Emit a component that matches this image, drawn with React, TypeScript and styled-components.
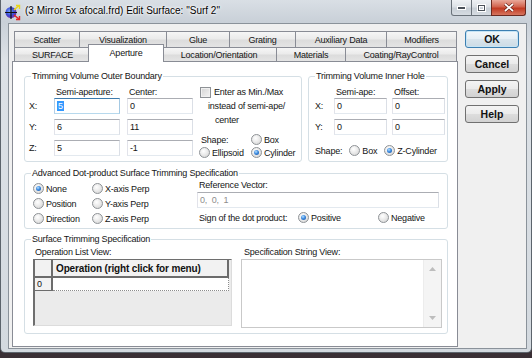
import React from "react";
import styled, { createGlobalStyle, css } from "styled-components";

const GlobalStyle = createGlobalStyle`
  html, body {
    margin: 0;
    padding: 0;
    background: #22343d;
  }
`;

const Screen = styled.div`
  width: 532px;
  height: 358px;
  overflow: hidden;
  display: flex;
  flex-direction: column;
  background: linear-gradient(#5aa7b9 0, #5aa7b9 1px, #263840 1px, #3a2f35 100%);
  font-family: "Liberation Sans", Arial, sans-serif;
  font-size: 9px;
  letter-spacing: -0.2px;
  color: #151515;
`;

const Window = styled.div`
  height: 353px;
  flex: none;
  box-sizing: border-box;
  display: flex;
  flex-direction: column;
  border: 1px solid #5c646c;
  border-top: none;
  border-radius: 0 0 5px 5px;
  background: linear-gradient(to bottom, #d9dfe5 0, #c9d0d8 22px, #dde2e7 60px, #d3d9df 100%);
`;

const TitleBar = styled.div`
  height: 23px;
  flex: none;
  display: flex;
  align-items: flex-start;
  padding: 0 5px 0 3px;
`;

const Title = styled.div`
  margin: 4px 0 0 3px;
  font-size: 10px;
  letter-spacing: 0;
  line-height: 14px;
  color: #000;
  white-space: nowrap;
  text-shadow: 0 0 5px #fff, 0 0 3px #fff, 0 0 1px #fff;
`;

const WinButtons = styled.div`
  margin-left: auto;
  display: flex;
  height: 16px;
`;

const WinBtn = styled.div<{ $close?: boolean; $w: number }>`
  box-sizing: border-box;
  width: ${(p) => p.$w}px;
  height: 16px;
  display: flex;
  align-items: center;
  justify-content: center;
  border: 1px solid #6a727a;
  border-top: none;
  margin-left: -1px;
  background: linear-gradient(#eef1f4, #dce1e6 45%, #c8cfd6 55%, #d6dce2);
  &:first-child {
    margin-left: 0;
    border-bottom-left-radius: 3px;
  }
  ${(p) =>
    p.$close &&
    css`
      border-color: #6b2a20;
      border-bottom-right-radius: 3px;
      background: linear-gradient(#e9a99a, #d2634e 45%, #c13a22 55%, #d6755f);
    `}
`;

const Client = styled.div`
  flex: 1;
  min-height: 0;
  margin: 0 4px 3px 7px;
  border: 1px solid #8a929a;
  background: #f0f0f0;
  display: flex;
  align-items: stretch;
  padding: 6px 0 1px 3px;
`;

const TabControl = styled.div`
  width: 446px;
  margin-top: 1px;
  display: flex;
  flex-direction: column;
`;

const TabRow = styled.div<{ $h: number }>`
  display: flex;
  align-items: flex-end;
  height: ${(p) => p.$h}px;
  padding-left: 2px;
  flex: none;
`;

const Tab = styled.div<{ $w: number; $active?: boolean }>`
  box-sizing: border-box;
  width: ${(p) => p.$w}px;
  height: 100%;
  margin-left: -1px;
  display: flex;
  align-items: center;
  justify-content: center;
  white-space: nowrap;
  border: 1px solid #898c95;
  border-bottom: none;
  background: linear-gradient(#f6f6f6, #ebebeb 45%, #dcdcdc 55%, #e4e4e4);
  &:first-child {
    margin-left: 0;
  }
  ${(p) =>
    p.$active &&
    css`
      position: relative;
      z-index: 2;
      height: 18px;
      margin: 0 -2px -1px -3px;
      background: #fff;
      padding-bottom: 1px;
    `}
`;

const Pane = styled.div`
  flex: 1;
  background: #fff;
  border: 1px solid #898c95;
  padding: 14px 9px 0 11px;
  display: flex;
  flex-direction: column;
`;

const GroupRow = styled.div`
  display: flex;
  gap: 6px;
`;

const Group = styled.div<{ $w: number; $h: number; $mt?: number; $pad: string }>`
  position: relative;
  box-sizing: border-box;
  flex: none;
  width: ${(p) => p.$w}px;
  height: ${(p) => p.$h}px;
  margin-top: ${(p) => p.$mt ?? 0}px;
  padding: ${(p) => p.$pad};
  border: 1px solid #d5dfe5;
  border-radius: 3px;
  display: flex;
  align-items: flex-start;
`;

const Legend = styled.span`
  position: absolute;
  top: -6px;
  left: 6px;
  padding: 0 1px;
  line-height: 11px;
  background: #fff;
  white-space: nowrap;
`;

const CoordGrid = styled.div<{ $label: number; $field: number; $gap: number }>`
  display: grid;
  grid-template-columns: ${(p) => p.$label}px ${(p) => p.$field}px ${(p) => p.$field}px;
  grid-template-rows: 12px;
  grid-auto-rows: 21px;
  column-gap: ${(p) => p.$gap}px;
  align-items: start;
`;

const ColHead = styled.div`
  line-height: 12px;
  padding-left: 2px;
  white-space: nowrap;
`;

const RowLabel = styled.div`
  line-height: 16px;
`;

const Field = styled.div<{ $focus?: boolean; $disabled?: boolean }>`
  box-sizing: border-box;
  height: 16px;
  border: 1px solid;
  border-color: #abadb3 #dbdfe6 #e3e9ef #e2e3ea;
  background: #fff;
  padding-left: 2px;
  line-height: 14px;
  white-space: nowrap;
  color: ${(p) => (p.$disabled ? "#8d8d8d" : "#151515")};
  ${(p) =>
    p.$focus &&
    css`
      border-color: #3d7bad #a4c9e3 #b7d9ed #b5cfe7;
    `}
`;

const Selected = styled.span`
  background: #3399ff;
  color: #fff;
  padding: 0 1px;
`;

const SideColumn = styled.div<{ $ml: number }>`
  margin-left: ${(p) => p.$ml}px;
  display: flex;
  flex-direction: column;
`;

const CheckRow = styled.div`
  display: flex;
  align-items: flex-start;
`;

const CheckBox = styled.span`
  flex: none;
  box-sizing: border-box;
  width: 11px;
  height: 11px;
  margin: 1px 0 0 1px;
  border: 1px solid #8e9296;
  background: linear-gradient(135deg, #d4d4d4, #f4f4f4);
  box-shadow: inset 0 0 0 1px #f0f0f0;
`;

const CheckText = styled.div`
  margin: -1px 0 0 3px;
  line-height: 14px;
`;

const Line = styled.span<{ $indent?: number }>`
  display: block;
  white-space: nowrap;
  margin-left: ${(p) => p.$indent ?? 0}px;
`;

const ShapeGrid = styled.div`
  margin-top: 6px;
  display: grid;
  grid-template-columns: 52px auto;
  grid-auto-rows: 13px;
  align-items: center;
`;

const PadLabel = styled.span<{ $pl?: number }>`
  padding-left: ${(p) => p.$pl ?? 2}px;
  white-space: nowrap;
`;

const Option = styled.label`
  display: inline-flex;
  align-items: center;
  gap: 2px;
  white-space: nowrap;
`;

const RadioDot = styled.span<{ $on?: boolean }>`
  position: relative;
  flex: none;
  box-sizing: border-box;
  width: 11px;
  height: 11px;
  border-radius: 50%;
  border: 1px solid #8e9296;
  background: radial-gradient(circle at 40% 35%, #ffffff 0, #ebebeb 45%, #cfcfcf 100%);
  ${(p) =>
    p.$on &&
    css`
      &::after {
        content: "";
        position: absolute;
        inset: 2px;
        border-radius: 50%;
        background: radial-gradient(circle at 40% 35%, #b8e2ff 0, #3c8ae0 45%, #174f9c 100%);
      }
    `}
`;

const InnerShapeRow = styled.div`
  margin-top: 4px;
  height: 13px;
  display: flex;
  align-items: center;
  gap: 7px;
`;

const RadioGrid = styled.div`
  margin-top: 1px;
  display: grid;
  grid-template-columns: 59px 105px;
  grid-auto-rows: 15px;
  align-items: center;
`;

const RefColumn = styled.div`
  width: 242px;
  display: flex;
  flex-direction: column;
`;

const SmallLabel = styled.div<{ $pl: number }>`
  line-height: 11px;
  padding-left: ${(p) => p.$pl}px;
  white-space: nowrap;
`;

const SignRow = styled.div`
  margin-top: 3px;
  height: 13px;
  display: grid;
  grid-template-columns: 101px 80px auto;
  align-items: center;
`;

const ViewColumn = styled.div<{ $ml?: number }>`
  margin-left: ${(p) => p.$ml ?? 0}px;
  display: flex;
  flex-direction: column;
  gap: 1px;
`;

const OpGrid = styled.div`
  box-sizing: border-box;
  width: 199px;
  height: 67px;
  border-style: solid;
  border-width: 1px 1px 1px 2px;
  border-color: #6e6e6e #dcdcdc #dcdcdc #6e6e6e;
  background: #ebebeb;
  display: grid;
  grid-template-columns: 18px 176px;
  grid-template-rows: 18px 13px;
  align-content: start;
`;

const HeadCell = styled.div<{ $bold?: boolean }>`
  box-sizing: border-box;
  background: #f2f2f2;
  border-right: 2px solid #6c6c6c;
  border-bottom: 2px solid #6c6c6c;
  padding-left: 3px;
  display: flex;
  align-items: center;
  white-space: nowrap;
  ${(p) =>
    p.$bold &&
    css`
      font-weight: bold;
      font-size: 10px;
      letter-spacing: -0.15px;
      color: #111;
    `}
`;

const RowHead = styled.div`
  box-sizing: border-box;
  background: #f2f2f2;
  border-right: 2px solid #6c6c6c;
  border-bottom: 1px solid #6c6c6c;
  padding-left: 2px;
  line-height: 12px;
`;

const DataCell = styled.div`
  box-sizing: border-box;
  background: #fff;
  border-right: 1px dotted #8c8c8c;
  border-bottom: 1px dotted #8c8c8c;
`;

const SpecBox = styled.div`
  box-sizing: border-box;
  width: 201px;
  height: 69px;
  border: 1px solid #c9c9c9;
  background: #fff;
  display: flex;
  justify-content: flex-end;
`;

const ScrollTrack = styled.div`
  width: 17px;
  background: #f4f4f4;
  border-left: 1px solid #ececec;
  display: flex;
  flex-direction: column;
  justify-content: space-between;
  align-items: center;
  padding: 7px 0;
`;

const ButtonColumn = styled.div`
  margin-left: 7px;
  width: 54px;
  display: flex;
  flex-direction: column;
  gap: 7px;
`;

const DlgButton = styled.div<{ $default?: boolean }>`
  box-sizing: border-box;
  height: 18px;
  border: 1px solid #707070;
  border-radius: 3px;
  display: flex;
  align-items: center;
  justify-content: center;
  font-weight: bold;
  font-size: 10.5px;
  letter-spacing: 0;
  color: #111;
  background: linear-gradient(#f4f4f4, #ebebeb 48%, #dddddd 52%, #d2d2d2);
  ${(p) =>
    p.$default &&
    css`
      border-color: #3c7fb1;
      box-shadow: inset 0 0 0 1px #c6e4f5;
      background: linear-gradient(#f3f8fb, #e6eff5 48%, #d8e4ec 52%, #ccdbe5);
    `}
`;

const rowOneTabs = [
  { label: "Scatter", w: 66 },
  { label: "Visualization", w: 88 },
  { label: "Glue", w: 64 },
  { label: "Grating", w: 67 },
  { label: "Auxiliary Data", w: 92 },
  { label: "Modifiers", w: 71 },
];

const rowTwoTabs = [
  { label: "SURFACE", w: 77 },
  { label: "Aperture", w: 76, active: true },
  { label: "Location/Orientation", w: 116 },
  { label: "Materials", w: 70 },
  { label: "Coating/RayControl", w: 112 },
];

function Radio({ label, on }: { label: string; on?: boolean }) {
  return (
    <Option>
      <RadioDot $on={on} />
      {label}
    </Option>
  );
}

function AppIcon() {
  return (
    <svg width="18" height="18" viewBox="0 0 18 18" style={{ marginTop: 3, flex: "none" }}>
      <defs>
        <radialGradient id="ig" cx="40%" cy="40%" r="60%">
          <stop offset="0" stopColor="#7fb0ff" />
          <stop offset="0.6" stopColor="#3b4fd8" />
          <stop offset="1" stopColor="#6a2fb0" />
        </radialGradient>
      </defs>
      <circle cx="7" cy="9.5" r="5.5" fill="url(#ig)" />
      <path d="M7 3v13M1 9.5h12" stroke="#111" strokeWidth="1.2" />
      <path d="M10 7l5-4.5" stroke="#e8d51a" strokeWidth="1.6" />
      <path d="M12 2.5h3.5v3.5" fill="none" stroke="#e8d51a" strokeWidth="1.4" />
      <path d="M10 12l5 4" stroke="#e02626" strokeWidth="1.6" />
      <path d="M12 16.5h3.5V13" fill="none" stroke="#e02626" strokeWidth="1.4" />
    </svg>
  );
}

function ScrollArrow({ down }: { down?: boolean }) {
  return (
    <svg width="7" height="4" viewBox="0 0 7 4">
      <path d={down ? "M0 0h7L3.5 4z" : "M0 4h7L3.5 0z"} fill="#bdbdbd" />
    </svg>
  );
}

export default function App() {
  return (
    <Screen>
      <GlobalStyle />
      <Window>
        <TitleBar>
          <AppIcon />
          <Title>(3 Mirror 5x afocal.frd) Edit Surface: "Surf 2"</Title>
          <WinButtons>
            <WinBtn $w={21}>
              <svg width="9" height="4" viewBox="0 0 9 4">
                <rect x="0.5" y="0.5" width="8" height="3" fill="#4a5159" stroke="#fff" />
              </svg>
            </WinBtn>
            <WinBtn $w={21}>
              <svg width="9" height="8" viewBox="0 0 9 8">
                <rect x="0.5" y="0.5" width="8" height="7" fill="none" stroke="#fff" />
                <rect x="1.5" y="1.5" width="6" height="5" fill="none" stroke="#4a5159" />
                <rect x="2.5" y="2.5" width="4" height="3" fill="none" stroke="#fff" />
              </svg>
            </WinBtn>
            <WinBtn $w={35} $close>
              <svg width="10" height="9" viewBox="0 0 10 9">
                <path d="M1 1l8 7M9 1L1 8" stroke="#5a1a12" strokeWidth="3" />
                <path d="M1 1l8 7M9 1L1 8" stroke="#fff" strokeWidth="1.8" />
              </svg>
            </WinBtn>
          </WinButtons>
        </TitleBar>

        <Client>
          <TabControl>
            <TabRow $h={16}>
              {rowOneTabs.map((t) => (
                <Tab key={t.label} $w={t.w}>
                  {t.label}
                </Tab>
              ))}
            </TabRow>
            <TabRow $h={14}>
              {rowTwoTabs.map((t) => (
                <Tab key={t.label} $w={t.w} $active={t.active}>
                  {t.label}
                </Tab>
              ))}
            </TabRow>

            <Pane>
              <GroupRow>
                <Group $w={278} $h={86} $pad="9px 0 0 4px">
                  <Legend>Trimming Volume Outer Boundary</Legend>
                  <CoordGrid $label={18} $field={66} $gap={7}>
                    <span />
                    <ColHead>Semi-aperture:</ColHead>
                    <ColHead>Center:</ColHead>
                    <RowLabel>X:</RowLabel>
                    <Field $focus>
                      <Selected>5</Selected>
                    </Field>
                    <Field>0</Field>
                    <RowLabel>Y:</RowLabel>
                    <Field>6</Field>
                    <Field>11</Field>
                    <RowLabel>Z:</RowLabel>
                    <Field>5</Field>
                    <Field>-1</Field>
                  </CoordGrid>
                  <SideColumn $ml={6}>
                    <CheckRow>
                      <CheckBox />
                      <CheckText>
                        <Line>Enter as Min./Max</Line>
                        <Line $indent={-6}>instead of semi-ape/</Line>
                        <Line $indent={1}>center</Line>
                      </CheckText>
                    </CheckRow>
                    <ShapeGrid>
                      <PadLabel>Shape:</PadLabel>
                      <Radio label="Box" />
                      <Radio label="Ellipsoid" />
                      <Radio label="Cylinder" on />
                    </ShapeGrid>
                  </SideColumn>
                </Group>

                <Group $w={140} $h={86} $pad="9px 0 0 6px">
                  <Legend>Trimming Volume Inner Hole</Legend>
                  <SideColumn $ml={0}>
                    <CoordGrid $label={14} $field={53} $gap={5}>
                      <span />
                      <ColHead>Semi-ape:</ColHead>
                      <ColHead>Offset:</ColHead>
                      <RowLabel>X:</RowLabel>
                      <Field>0</Field>
                      <Field>0</Field>
                      <RowLabel>Y:</RowLabel>
                      <Field>0</Field>
                      <Field>0</Field>
                    </CoordGrid>
                    <InnerShapeRow>
                      <span>Shape:</span>
                      <Radio label="Box" />
                      <Radio label="Z-Cylinder" on />
                    </InnerShapeRow>
                  </SideColumn>
                </Group>
              </GroupRow>

              <Group $w={424} $h={56} $mt={11} $pad="6px 0 0 8px">
                <Legend>Advanced Dot-product Surface Trimming Specification</Legend>
                <RadioGrid>
                  <Radio label="None" on />
                  <Radio label="X-axis Perp" />
                  <Radio label="Position" />
                  <Radio label="Y-axis Perp" />
                  <Radio label="Direction" />
                  <Radio label="Z-axis Perp" />
                </RadioGrid>
                <RefColumn>
                  <SmallLabel $pl={2}>Reference Vector:</SmallLabel>
                  <Field $disabled style={{ marginTop: 1 }}>
                    0,&nbsp; 0,&nbsp; 1
                  </Field>
                  <SignRow>
                    <PadLabel>Sign of the dot product:</PadLabel>
                    <Radio label="Positive" on />
                    <Radio label="Negative" />
                  </SignRow>
                </RefColumn>
              </Group>

              <Group $w={424} $h={95} $mt={10} $pad="7px 0 0 8px">
                <Legend>Surface Trimming Specification</Legend>
                <ViewColumn>
                  <SmallLabel $pl={2}>Operation List View:</SmallLabel>
                  <OpGrid>
                    <HeadCell />
                    <HeadCell $bold>Operation (right click for menu)</HeadCell>
                    <RowHead>0</RowHead>
                    <DataCell />
                  </OpGrid>
                </ViewColumn>
                <ViewColumn $ml={9}>
                  <SmallLabel $pl={3}>Specification String View:</SmallLabel>
                  <SpecBox>
                    <ScrollTrack>
                      <ScrollArrow />
                      <ScrollArrow down />
                    </ScrollTrack>
                  </SpecBox>
                </ViewColumn>
              </Group>
            </Pane>
          </TabControl>

          <ButtonColumn>
            <DlgButton $default>OK</DlgButton>
            <DlgButton>Cancel</DlgButton>
            <DlgButton>Apply</DlgButton>
            <DlgButton>Help</DlgButton>
          </ButtonColumn>
        </Client>
      </Window>
    </Screen>
  );
}
